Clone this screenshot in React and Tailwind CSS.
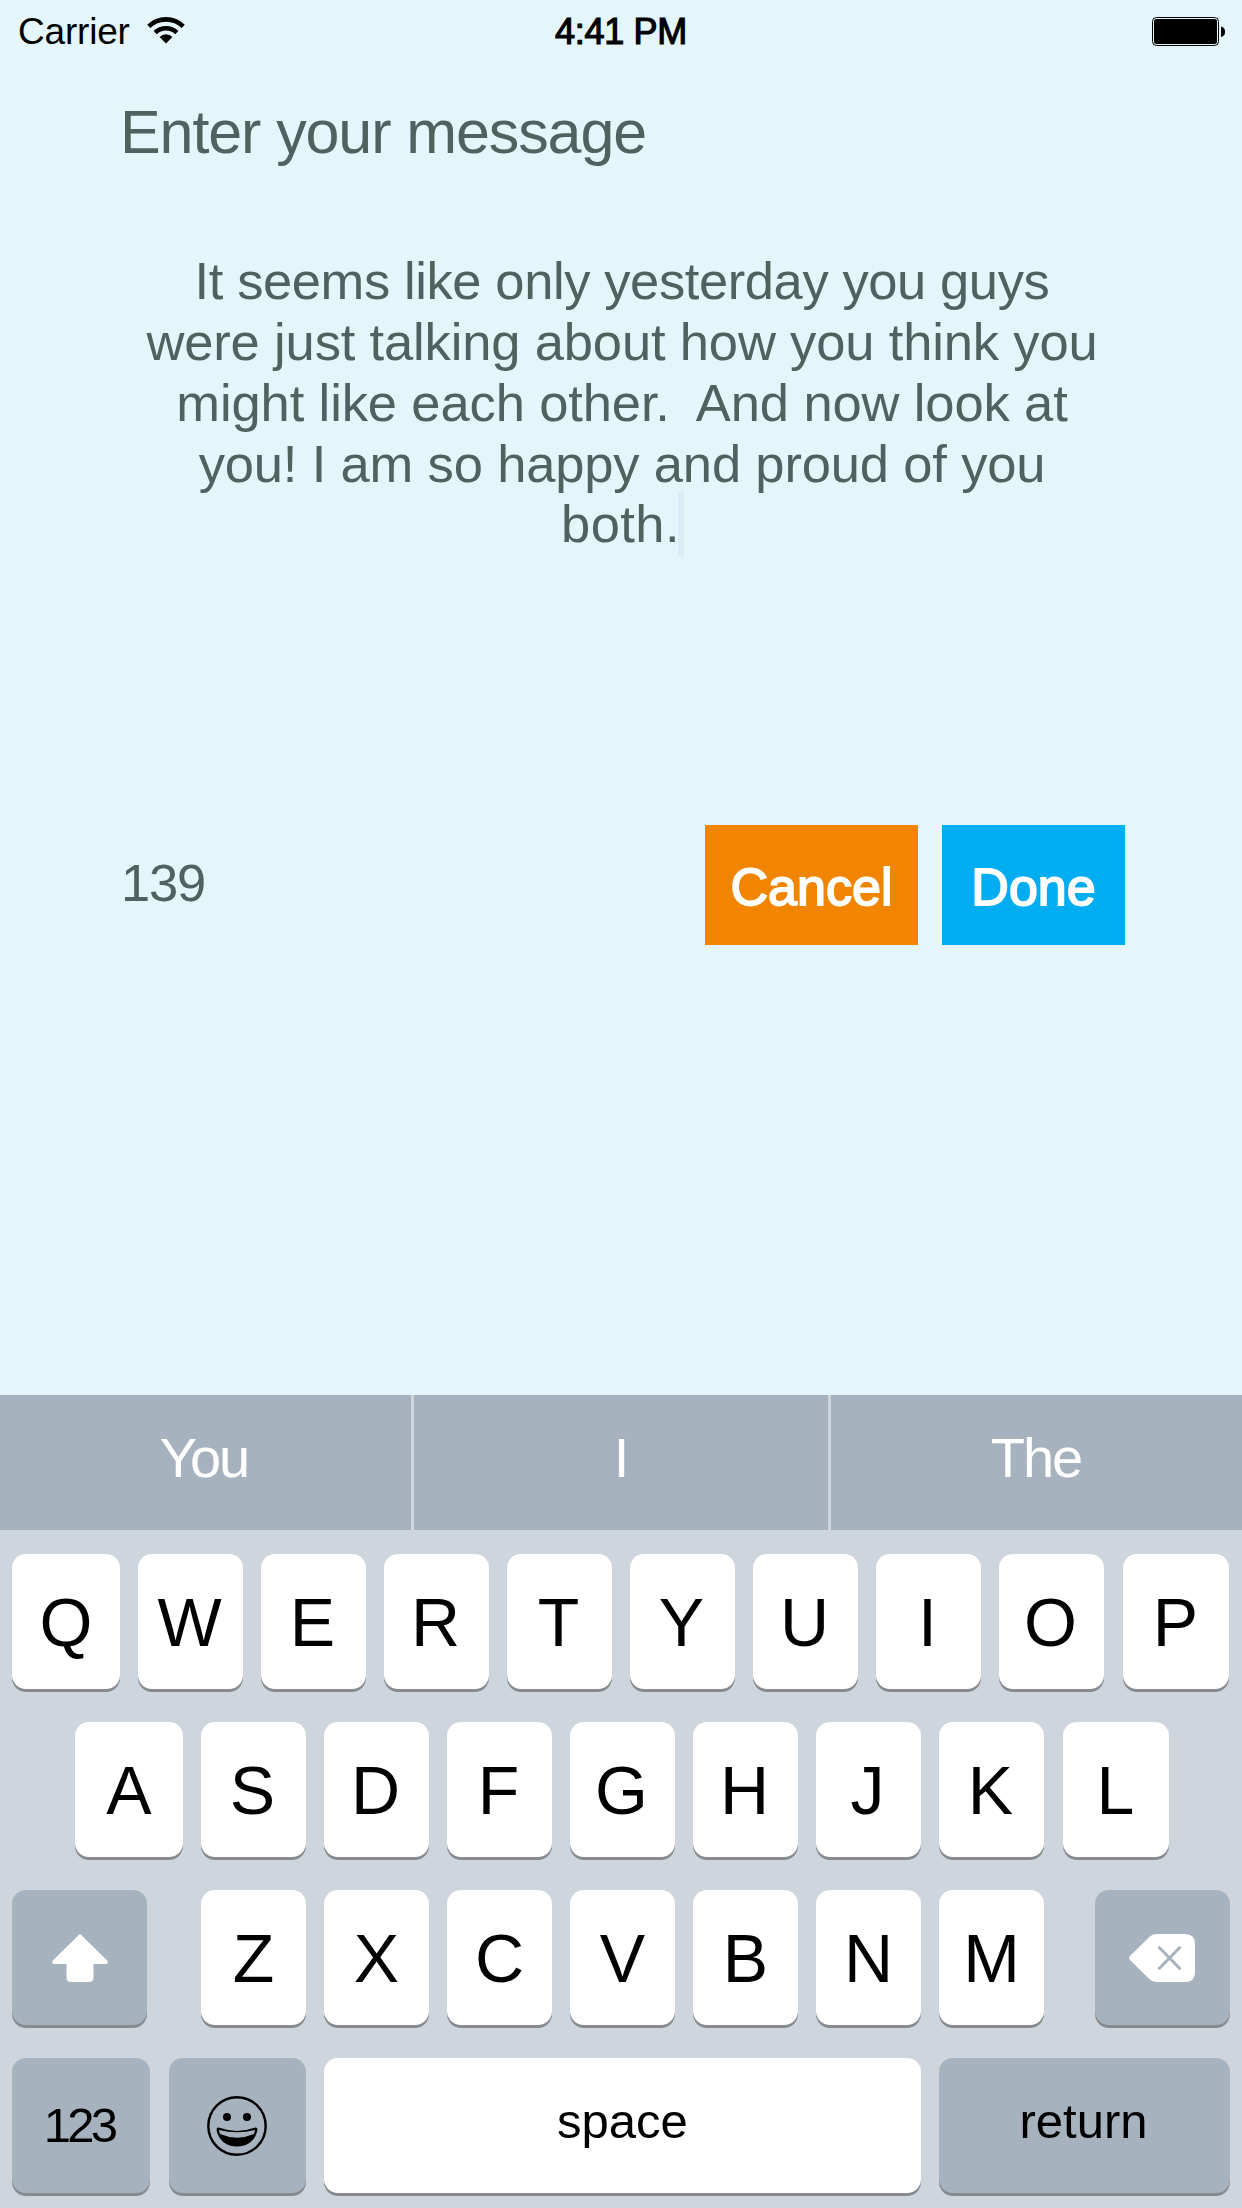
import React from "react";

const ROW_ONE = ["Q", "W", "E", "R", "T", "Y", "U", "I", "O", "P"];
const ROW_TWO = ["A", "S", "D", "F", "G", "H", "J", "K", "L"];
const ROW_THREE = ["Z", "X", "C", "V", "B", "N", "M"];

const MESSAGE = [
  { text: "It seems like only yesterday you guys", tracking: "tracking-[-0.4px]" },
  { text: "were just talking about how you think you", tracking: "tracking-[-0.15px]" },
  { text: "might like each other.\u00a0 And now look at", tracking: "tracking-[-0.12px]" },
  { text: "you! I am so happy and proud of you", tracking: "tracking-[-0.16px]" },
];

function Key({ className = "w-[105px]", dark = false, children }) {
  return (
    <button
      className={`flex h-[135px] shrink-0 items-center justify-center rounded-[14px] text-black shadow-[0_3px_0_#878b8f] ${
        dark ? "bg-[#a6b2bd]" : "bg-white"
      } ${className}`}
    >
      {children}
    </button>
  );
}

function LetterRow({ letters, className }) {
  return (
    <div className={`flex gap-[18px] text-[68px] leading-none ${className}`}>
      {letters.map((letter, i) => (
        <Key
          key={letter}
          className={
            i === 0
              ? "w-[108px]"
              : i === letters.length - 1
                ? "ml-px w-[106px] pr-px"
                : "w-[105px] pr-[2px]"
          }
        >
          {letter}
        </Key>
      ))}
    </div>
  );
}

function WifiIcon() {
  return (
    <svg className="h-[28px] w-[38px]" viewBox="0 0 38 28" fill="none" stroke="#000">
      <path d="M1.8 10.3A24.8 24.8 0 0 1 36.2 10.3" strokeWidth="4.6" />
      <path d="M8.2 16.6A15.4 15.4 0 0 1 29.8 16.6" strokeWidth="4.6" />
      <path d="M12.6 21A8.8 8.8 0 0 1 25.4 21L19 27.6Z" fill="#000" stroke="none" />
    </svg>
  );
}

function BatteryIcon() {
  return (
    <svg className="h-[29px] w-[74px]" viewBox="0 0 74 29">
      <rect x="0.5" y="0.5" width="66" height="28" rx="4" fill="none" stroke="#000" />
      <rect x="2" y="2" width="63" height="25" rx="2.5" fill="#000" />
      <path d="M69 9.5C72 10 73 12 73 14.8S72 19.5 69 20Z" fill="#000" />
    </svg>
  );
}

function ShiftIcon() {
  return (
    <svg className="h-[48px] w-[58px]" viewBox="0 0 58 48" fill="#fff">
      <path d="M27.8 0.9Q29 -0.2 30.2 0.9L56.4 26.8Q58 29.6 55.2 30H42.5V43.5Q42.5 48 38 48H20Q15.5 48 15.5 43.5V30H2.8Q0 29.6 1.6 26.8Z" />
    </svg>
  );
}

function DeleteIcon() {
  return (
    <svg className="h-[48px] w-[66px]" viewBox="0 0 66 48">
      <path
        d="M27 0H56Q66 0 66 10V38Q66 48 56 48H27Q23.5 48 20.5 45.2L1 26Q-0.8 24 1 22L20.5 2.8Q23.5 0 27 0Z"
        fill="#fff"
      />
      <path d="M29.5 12.8L51.5 35.2M51.5 12.8L29.5 35.2" stroke="#a6b2bd" strokeWidth="3" />
    </svg>
  );
}

function SmileIcon() {
  return (
    <svg className="h-[60px] w-[60px]" viewBox="0 0 60 60">
      <circle cx="30" cy="30" r="28.7" fill="none" stroke="#000" strokeWidth="2.4" />
      <circle cx="20" cy="21" r="4" />
      <circle cx="40" cy="21" r="4" />
      <path d="M11.5 31.6Q30 38.2 48.5 31.6Q50.6 31.4 50.4 34C48.5 44.5 40.5 50.5 30 50.5S11.5 44.5 9.6 34Q9.4 31.4 11.5 31.6Z" />
      <path
        d="M12 34.1Q30 38.6 48 34.1Q48 36.2 46.8 38Q30 45.4 13.2 38Q12 36.2 12 34.1Z"
        fill="#a6b2bd"
      />
    </svg>
  );
}

export default function App() {
  return (
    <div className="flex h-[2208px] w-[1242px] flex-col overflow-hidden bg-[#e4f6f9] font-['Liberation_Sans',Arial,sans-serif] text-[#50625f]">
      <header className="grid h-[62px] grid-cols-3 items-center pr-4 pl-[18px] text-black">
        <div className="flex items-center pt-px">
          <span className="text-[37px] leading-none tracking-[-0.2px]">Carrier</span>
          <span className="-mt-1 ml-[17px]">
            <WifiIcon />
          </span>
        </div>
        <span className="pt-px pr-[2px] text-center text-[36px] leading-none tracking-[-0.3px] [-webkit-text-stroke:1.2px_black]">
          4:41 PM
        </span>
        <div className="flex justify-end">
          <BatteryIcon />
        </div>
      </header>

      <main className="flex h-[1333px] flex-col px-[117px]">
        <h1 className="mt-[39px] pl-[3px] text-[61px] leading-[62px] tracking-[-1.1px]">
          Enter your message
        </h1>
        <div className="mt-[87px] h-[575px] text-center text-[52.5px] leading-[61px]">
          {MESSAGE.map((line) => (
            <p key={line.text} className={`pl-[2px] whitespace-pre ${line.tracking}`}>
              {line.text}
            </p>
          ))}
          <p className="-mt-px flex justify-center pl-[3px]">
            <span className="tracking-[0.4px]">both.</span>
            <span className="-mt-[2px] -ml-[2px] h-[66px] w-[6px] bg-[#d9edf7]" />
          </p>
        </div>
        <div className="flex h-[120px] items-center">
          <span className="grow pb-[3px] pl-[4px] text-[52.5px] leading-none tracking-[-1.2px]">139</span>
          <button className="h-full w-[213px] bg-[#f28500] pt-[3px] text-[52px] leading-none text-white [-webkit-text-stroke:1.8px_white]">
            Cancel
          </button>
          <button className="ml-6 h-full w-[183px] bg-[#00adf0] pt-[3px] text-[52px] leading-none text-white [-webkit-text-stroke:1.8px_white]">
            Done
          </button>
        </div>
      </main>

      <section className="flex h-[813px] flex-col bg-[#ced5dc]">
        <div className="flex h-[135px] text-[56px] leading-none tracking-[-2px] text-white">
          <span className="flex w-[411px] items-center justify-center bg-[#a6b2bd] pr-[3px] pb-[10px]">You</span>
          <span className="mx-[3px] flex w-[414px] items-center justify-center bg-[#a6b2bd] pr-px pb-[10px]">I</span>
          <span className="flex w-[411px] items-center justify-center bg-[#a6b2bd] pr-px pb-[10px]">The</span>
        </div>
        <div className="flex flex-col gap-[33px] pt-6">
          <LetterRow letters={ROW_ONE} className="pl-3" />
          <LetterRow letters={ROW_TWO} className="pl-[75px]" />
          <div className="flex justify-between px-3 text-[68px] leading-none">
            <Key dark className="w-[135px]">
              <ShiftIcon />
            </Key>
            <div className="ml-[3px] flex gap-[18px]">
              {ROW_THREE.map((letter) => (
                <Key key={letter}>{letter}</Key>
              ))}
            </div>
            <Key dark className="w-[135px] pr-[2px]">
              <DeleteIcon />
            </Key>
          </div>
          <div className="flex px-3 text-[49px] leading-none">
            <Key dark className="w-[138px] pr-[4px] tracking-[-3.8px]">
              123
            </Key>
            <Key dark className="ml-[19px] w-[137px] pr-px">
              <SmileIcon />
            </Key>
            <Key className="ml-[18px] w-[597px] pb-[8px]">space</Key>
            <Key dark className="ml-[18px] w-[291px] pr-[2px] pb-[8px]">
              return
            </Key>
          </div>
        </div>
      </section>
    </div>
  );
}
